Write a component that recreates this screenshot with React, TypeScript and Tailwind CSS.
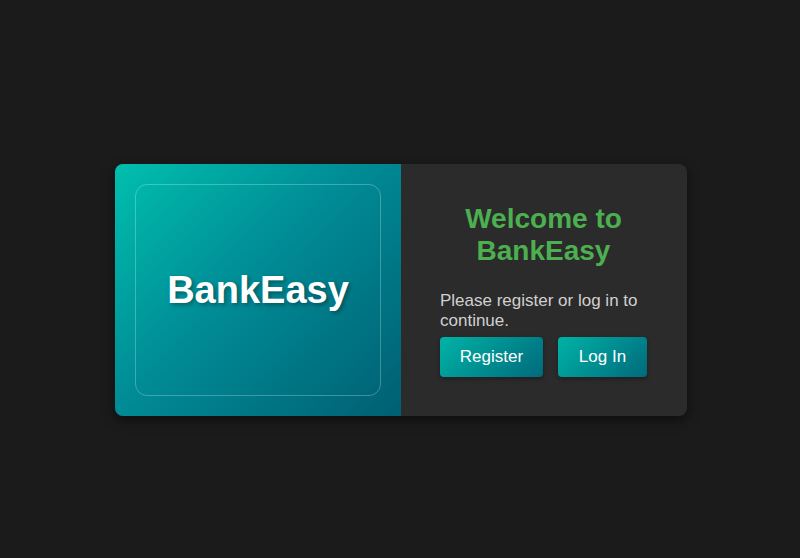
export default function App() {
  return (
    <div className="flex min-h-[558px] w-full items-center justify-center bg-[#1b1b1b] pl-[2px] pt-[22px] font-['Liberation_Sans',Arial,sans-serif]">
      <div className="flex h-[252px] w-[572px] overflow-hidden rounded-lg bg-[#2b2b2b] shadow-[0_4px_12px_rgba(0,0,0,0.5)]">
        <div className="flex w-1/2 bg-[linear-gradient(135deg,#00bfae,#008c96_45%,#005f73)] p-5">
          <div className="flex flex-1 items-center justify-center rounded-xl border border-white/25">
            <h1 className="text-[38px] font-bold text-white [text-shadow:2px_2px_4px_rgba(0,0,0,0.35)]">BankEasy</h1>
          </div>
        </div>
        <div className="flex w-1/2 flex-col justify-center pl-[39px] pr-[40px]">
          <h2 className="text-center text-[28px] font-bold leading-[32px] text-[#4caf50]">Welcome to BankEasy</h2>
          <p className="mt-6 text-[17px] leading-[20px] text-[#d0d0d0]">Please register or log in to continue.</p>
          <div className="mt-[6px] flex gap-[15px]">
            <button className="h-10 w-[103px] rounded bg-[linear-gradient(135deg,#00b3a6,#006a7c)] text-[17px] text-white shadow-[0_2px_4px_rgba(0,0,0,0.3)]">Register</button>
            <button className="h-10 w-[89px] rounded bg-[linear-gradient(135deg,#00b3a6,#006a7c)] text-[17px] text-white shadow-[0_2px_4px_rgba(0,0,0,0.3)]">Log In</button>
          </div>
        </div>
      </div>
    </div>
  );
}
